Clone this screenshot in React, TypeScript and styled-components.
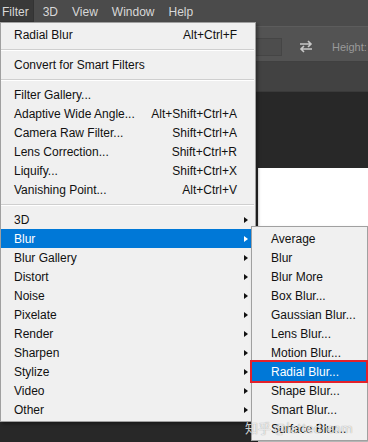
import React from "react";
import styled, { createGlobalStyle } from "styled-components";

const Global = createGlobalStyle`
  html, body { margin: 0; padding: 0; background: #282828; }
  body { font-family: "Liberation Sans", Arial, sans-serif; }
`;

const Screen = styled.div`
  position: relative;
  width: 368px;
  height: 442px;
  overflow: hidden;
  display: flex;
  flex-direction: column;
  font-family: "Liberation Sans", Arial, sans-serif;
  font-size: 12px;
`;

const MenuBar = styled.div`
  height: 27px;
  flex: none;
  display: flex;
  align-items: flex-start;
  gap: 7px;
  background: #4b4b4b;
  border-bottom: 1px solid #5c5c5c;
  box-sizing: border-box;
`;

const TopItem = styled.div<{ $active?: boolean }>`
  height: 22px;
  line-height: 24px;
  padding: 0 4px 0 2px;
  color: #d8d8d8;
  box-sizing: border-box;
  background: ${(p) => (p.$active ? "#393939" : "transparent")};
  border: 1px solid ${(p) => (p.$active ? "#333" : "transparent")};
  border-left: none;
  border-top: none;
`;

const OptionsBar = styled.div`
  height: 35px;
  flex: none;
  display: flex;
  align-items: center;
  padding-left: 228px;
  background: #535353;
  border-bottom: 1px solid #404040;
  box-sizing: border-box;
`;

const InputBox = styled.div`
  width: 52px;
  height: 16px;
  margin-top: 5px;
  background: #4d4d4d;
  border: 1px solid #454545;
`;

const SwapIcon = styled.svg`
  margin-left: 17px;
  margin-top: 4px;
`;

const OptionLabel = styled.span`
  margin-left: 19px;
  margin-top: 6px;
  color: #9a9a9a;
  font-size: 11px;
`;

const TabBand = styled.div`
  height: 30px;
  flex: none;
  background: #424242;
  border-bottom: 1px solid #3a3a3a;
  box-sizing: border-box;
`;

const Workspace = styled.div`
  flex: 1;
  display: flex;
  padding: 76px 0 0 258px;
  background: #282828;
`;

const Canvas = styled.div`
  flex: 1;
  background: #ffffff;
`;

const Menu = styled.div<{ $left: number; $top: number; $width: number }>`
  position: absolute;
  left: ${(p) => p.$left}px;
  top: ${(p) => p.$top}px;
  width: ${(p) => p.$width}px;
  box-sizing: border-box;
  background: #f0f0f0;
  border: 1px solid #a0a0a0;
  padding: 2px 0;
  box-shadow: 2px 2px 3px rgba(0, 0, 0, 0.35);
  color: #111;
`;

const Row = styled.div<{ $hl?: boolean; $pad: number; $framed?: boolean }>`
  position: relative;
  height: 19px;
  display: flex;
  align-items: center;
  padding-left: ${(p) => p.$pad}px;
  margin-right: 1px;
  background: ${(p) => (p.$hl ? "#0078d7" : "transparent")};
  color: ${(p) => (p.$hl ? "#ffffff" : "#111111")};
  outline: ${(p) => (p.$framed ? "2px solid #e3212b" : "none")};
  outline-offset: 0px;
`;

const Label = styled.span`
  flex: 1;
  white-space: nowrap;
`;

const Shortcut = styled.span`
  white-space: nowrap;
`;

const ArrowCell = styled.span`
  width: 17px;
  display: flex;
  justify-content: center;
`;

const Arrow = styled.span<{ $hl?: boolean }>`
  width: 0;
  height: 0;
  border-left: 4px solid ${(p) => (p.$hl ? "#ffffff" : "#111111")};
  border-top: 3.5px solid transparent;
  border-bottom: 3.5px solid transparent;
`;

const Separator = styled.div`
  height: 1px;
  margin: 5px 1px 4px 0;
  background: #cfcfcf;
  border-bottom: 1px solid #ffffff;
`;

const Watermark = styled.div`
  position: absolute;
  left: 245px;
  top: 418px;
  font-family: "Noto Sans CJK SC", "Liberation Sans", sans-serif;
  font-size: 13px;
  color: rgba(255, 255, 255, 0.8);
  text-shadow: 0 0 1px rgba(0, 0, 0, 0.45);
  white-space: nowrap;
  pointer-events: none;
`;

type Item =
  | { sep: true }
  | { label: string; shortcut?: string; sub?: boolean; hl?: boolean };

const filterItems: Item[] = [
  { label: "Radial Blur", shortcut: "Alt+Ctrl+F" },
  { sep: true },
  { label: "Convert for Smart Filters" },
  { sep: true },
  { label: "Filter Gallery..." },
  { label: "Adaptive Wide Angle...", shortcut: "Alt+Shift+Ctrl+A" },
  { label: "Camera Raw Filter...", shortcut: "Shift+Ctrl+A" },
  { label: "Lens Correction...", shortcut: "Shift+Ctrl+R" },
  { label: "Liquify...", shortcut: "Shift+Ctrl+X" },
  { label: "Vanishing Point...", shortcut: "Alt+Ctrl+V" },
  { sep: true },
  { label: "3D", sub: true },
  { label: "Blur", sub: true, hl: true },
  { label: "Blur Gallery", sub: true },
  { label: "Distort", sub: true },
  { label: "Noise", sub: true },
  { label: "Pixelate", sub: true },
  { label: "Render", sub: true },
  { label: "Sharpen", sub: true },
  { label: "Stylize", sub: true },
  { label: "Video", sub: true },
  { label: "Other", sub: true },
];

const blurItems = [
  "Average",
  "Blur",
  "Blur More",
  "Box Blur...",
  "Gaussian Blur...",
  "Lens Blur...",
  "Motion Blur...",
  "Radial Blur...",
  "Shape Blur...",
  "Smart Blur...",
  "Surface Blur...",
];

export default function App() {
  return (
    <>
      <Global />
      <Screen>
        <MenuBar>
          <TopItem $active>Filter</TopItem>
          <TopItem>3D</TopItem>
          <TopItem>View</TopItem>
          <TopItem>Window</TopItem>
          <TopItem>Help</TopItem>
        </MenuBar>
        <OptionsBar>
          <InputBox />
          <SwapIcon width="14" height="14" viewBox="0 0 14 14">
            <path d="M1 5 H12 M9 2 L12 5 L9 8" stroke="#c8c8c8" strokeWidth="1.6" fill="none" />
            <path d="M13 10 H2 M5 7 L2 10 L5 13" stroke="#c8c8c8" strokeWidth="1.6" fill="none" />
          </SwapIcon>
          <OptionLabel>Height:</OptionLabel>
        </OptionsBar>
        <TabBand />
        <Workspace>
          <Canvas />
        </Workspace>

        <Menu $left={0} $top={22} $width={256}>
          {filterItems.map((it, i) =>
            "sep" in it ? (
              <Separator key={i} />
            ) : (
              <Row key={i} $hl={it.hl} $pad={13}>
                <Label>{it.label}</Label>
                {it.shortcut && <Shortcut>{it.shortcut}</Shortcut>}
                <ArrowCell>{it.sub && <Arrow $hl={it.hl} />}</ArrowCell>
              </Row>
            )
          )}
        </Menu>

        <Menu $left={251} $top={226} $width={117}>
          {blurItems.map((label) => {
            const on = label === "Radial Blur...";
            return (
              <Row key={label} $pad={19} $hl={on} $framed={on}>
                <Label>{label}</Label>
              </Row>
            );
          })}
        </Menu>

        <Watermark>知乎 @lattedream</Watermark>
      </Screen>
    </>
  );
}
